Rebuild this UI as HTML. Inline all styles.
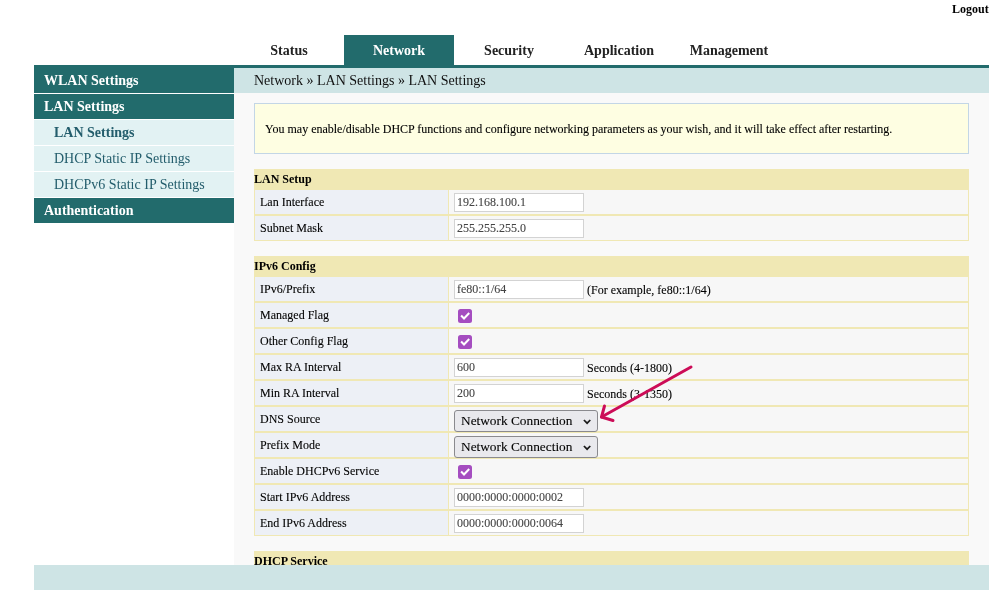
<!DOCTYPE html>
<html><head><meta charset="utf-8">
<style>
*{margin:0;padding:0;box-sizing:border-box}
html,body{width:1006px;height:602px;overflow:hidden;background:#fff;font-family:"Liberation Serif",serif;color:#000}
.a{position:absolute;white-space:nowrap;will-change:transform}
.lc,.vc,.notice,.hint{-webkit-text-stroke:0.1px currentColor}
.teal{background:#226b6c}
.logout{left:952px;top:0;font-weight:bold;font-size:12px;line-height:19px}
.tab{top:35px;width:110px;height:30px;text-align:center;font-weight:bold;font-size:14px;line-height:32px;color:#222}
.tab.on{background:#226b6c;color:#fff}
.side{left:34px;width:200px;height:25px;font-size:14px;line-height:25px}
.side.h{background:#226b6c;color:#fff;font-weight:bold;padding-left:10px}
.side.s{background:#e2f2f3;color:#235d6c;padding-left:20px}
.side.s.on{font-weight:bold}
.crumb{left:234px;top:68px;width:755px;height:25px;background:#cee4e5;font-size:14px;line-height:25px;padding-left:20px;color:#111}
.content{left:234px;top:93px;width:755px;height:472px;background:#f9f9f9}
.notice{left:254px;top:103px;width:715px;height:51px;background:#fefee2;border:1px solid #c3d6e6;font-size:12px;line-height:51px;padding-left:10px}
.th{left:254px;width:715px;height:21px;background:#f0e8b4;font-weight:bold;font-size:12px;line-height:20px}
.tbl{left:254px;width:715px;background:#f0e8b4}
.lc{position:absolute;left:1px;width:193px;height:24px;background:#edf0f6;font-size:12px;line-height:24px;padding-left:5px}
.vc{position:absolute;left:195px;width:519px;height:24px;background:#f7f7f7;font-size:12px;line-height:24px}
.inp{position:absolute;left:5px;top:3px;width:130px;height:19px;background:#fff;border:1px solid #d3d3d3;color:#444;font-size:12px;line-height:17px;padding-left:2px}
.hint{position:absolute;left:138px;top:1px;font-size:12px;line-height:24px}
.cb{position:absolute;left:9px;top:6px;width:14px;height:14px;background:#a54dc0;border-radius:2.5px}
.cb svg{position:absolute;left:0;top:0}
.sel{position:absolute;left:5px;top:3px;width:144px;height:22px;background:#e9e9ed;border:1px solid #8a8a8e;border-radius:3px;font-size:13.33px;line-height:20px;padding-left:6px;color:#000}
.sel svg{position:absolute;right:5px;top:8px}
.foot{left:34px;top:565px;width:955px;height:25px;background:#cee4e5}
</style></head><body>
<div class="a logout">Logout</div>

<div class="a tab" style="left:234px">Status</div>
<div class="a tab on" style="left:344px">Network</div>
<div class="a tab" style="left:454px">Security</div>
<div class="a tab" style="left:564px">Application</div>
<div class="a tab" style="left:674px">Management</div>
<div class="a teal" style="left:34px;top:65px;width:955px;height:3px"></div>

<div class="a side h" style="top:68px">WLAN Settings</div>
<div class="a side h" style="top:94px">LAN Settings</div>
<div class="a side s on" style="top:120px">LAN Settings</div>
<div class="a side s" style="top:146px">DHCP Static IP Settings</div>
<div class="a side s" style="top:172px">DHCPv6 Static IP Settings</div>
<div class="a side h" style="top:198px">Authentication</div>

<div class="a crumb">Network &raquo; LAN Settings &raquo; LAN Settings</div>
<div class="a content"></div>
<div class="a notice">You may enable/disable DHCP functions and configure networking parameters as your wish, and it will take effect after restarting.</div>

<!-- LAN Setup -->
<div class="a th" style="top:169px">LAN Setup</div>
<div class="a tbl" style="top:190px;height:51px">
  <div class="lc" style="top:0">Lan Interface</div>
  <div class="vc" style="top:0"><div class="inp">192.168.100.1</div></div>
  <div class="lc" style="top:26px">Subnet Mask</div>
  <div class="vc" style="top:26px"><div class="inp">255.255.255.0</div></div>
</div>

<!-- IPv6 Config -->
<div class="a th" style="top:256px">IPv6 Config</div>
<div class="a tbl" style="top:277px;height:259px">
  <div class="lc" style="top:0">IPv6/Prefix</div>
  <div class="vc" style="top:0"><div class="inp">fe80::1/64</div><div class="hint">(For example, fe80::1/64)</div></div>
  <div class="lc" style="top:26px">Managed Flag</div>
  <div class="vc" style="top:26px"><div class="cb"><svg width="14" height="14" viewBox="0 0 14 14"><path d="M3.1 6.5 L6 9.5 L11.2 4" fill="none" stroke="#fff" stroke-width="2"/></svg></div></div>
  <div class="lc" style="top:52px">Other Config Flag</div>
  <div class="vc" style="top:52px"><div class="cb"><svg width="14" height="14" viewBox="0 0 14 14"><path d="M3.1 6.5 L6 9.5 L11.2 4" fill="none" stroke="#fff" stroke-width="2"/></svg></div></div>
  <div class="lc" style="top:78px">Max RA Interval</div>
  <div class="vc" style="top:78px"><div class="inp">600</div><div class="hint">Seconds (4-1800)</div></div>
  <div class="lc" style="top:104px">Min RA Interval</div>
  <div class="vc" style="top:104px"><div class="inp">200</div><div class="hint">Seconds (3-1350)</div></div>
  <div class="lc" style="top:130px">DNS Source</div>
  <div class="vc" style="top:130px"><div class="sel">Network Connection<svg width="9" height="6" viewBox="0 0 9 6"><path d="M0.9 1 L4.1 4.2 L7.3 1" fill="none" stroke="#1a1a1a" stroke-width="1.7"/></svg></div></div>
  <div class="lc" style="top:156px">Prefix Mode</div>
  <div class="vc" style="top:156px"><div class="sel">Network Connection<svg width="9" height="6" viewBox="0 0 9 6"><path d="M0.9 1 L4.1 4.2 L7.3 1" fill="none" stroke="#1a1a1a" stroke-width="1.7"/></svg></div></div>
  <div class="lc" style="top:182px">Enable DHCPv6 Service</div>
  <div class="vc" style="top:182px"><div class="cb"><svg width="14" height="14" viewBox="0 0 14 14"><path d="M3.1 6.5 L6 9.5 L11.2 4" fill="none" stroke="#fff" stroke-width="2"/></svg></div></div>
  <div class="lc" style="top:208px">Start IPv6 Address</div>
  <div class="vc" style="top:208px"><div class="inp">0000:0000:0000:0002</div></div>
  <div class="lc" style="top:234px">End IPv6 Address</div>
  <div class="vc" style="top:234px"><div class="inp">0000:0000:0000:0064</div></div>
</div>

<div class="a th" style="top:551px">DHCP Service</div>
<div class="a foot"></div>

<svg class="a" style="left:0;top:0" width="1006" height="602" viewBox="0 0 1006 602">
  <path d="M691 367 L601.5 417" stroke="#cc0c57" stroke-width="3" stroke-linecap="round" fill="none"/>
  <path d="M604.5 406 L601.5 417 L613 420.5" stroke="#cc0c57" stroke-width="3" stroke-linecap="round" stroke-linejoin="round" fill="none"/>
</svg>
</body></html>
